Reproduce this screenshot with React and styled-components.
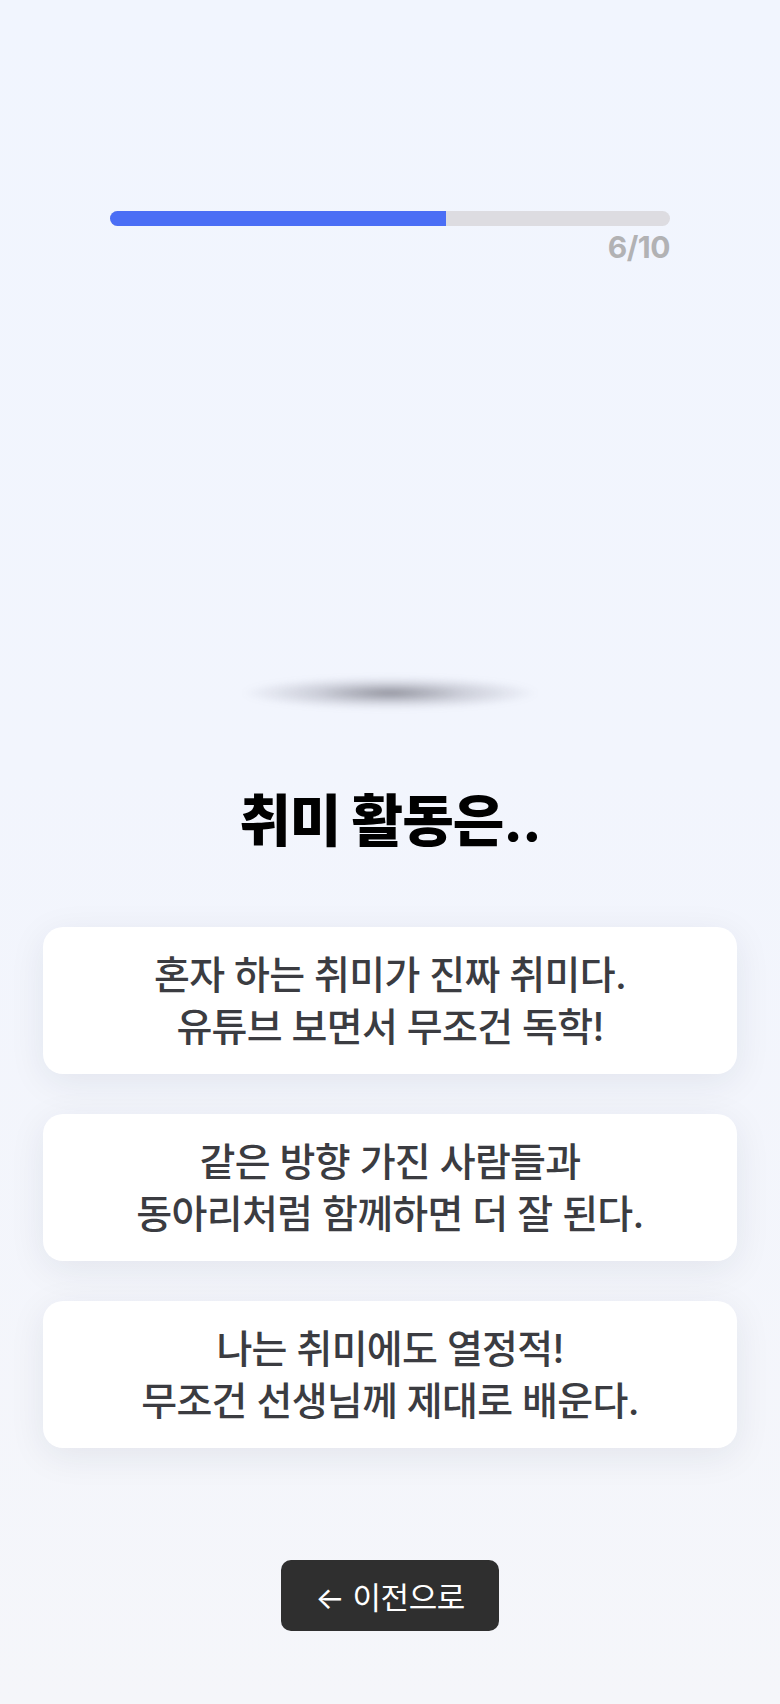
import React from 'react'
import styled, { createGlobalStyle } from 'styled-components'

const GlobalStyle = createGlobalStyle`
  * { box-sizing: border-box; }
  body {
    margin: 0;
    font-family: "Inter", "Noto Sans CJK KR", sans-serif;
    background: #f3f5fc;
  }
`

const options = [
    ['혼자 하는 취미가 진짜 취미다.', '유튜브 보면서 무조건 독학!'],
    ['같은 방향 가진 사람들과', '동아리처럼 함께하면 더 잘 된다.'],
    ['나는 취미에도 열정적!', '무조건 선생님께 제대로 배운다.'],
]

const App = () => {
    const step = 6
    const total = 10
    return (
        <Page>
            <GlobalStyle />
            <Progress>
                <Track>
                    <Fill style={{ width: `${(step / total) * 100}%` }} />
                </Track>
                <Count>{step}/{total}</Count>
            </Progress>
            <Stage>
                <Shadow />
            </Stage>
            <Title>취미 활동은..</Title>
            <Options>
                {options.map((lines, i) => (
                    <Option key={i}>
                        {lines.map((line, j) => (
                            <Line key={j}>{line}</Line>
                        ))}
                    </Option>
                ))}
            </Options>
            <Footer>
                <BackButton>← 이전으로</BackButton>
            </Footer>
        </Page>
    )
}

export default App

const Page = styled.div`
    min-height: 1704px;
    width: 100%;
    padding: 211px 43px 0;
    display: flex;
    flex-direction: column;
    align-items: center;
    background: linear-gradient(180deg, #f1f5fe 0%, #f2f5fd 45%, #f5f6fa 100%);
`

const Progress = styled.div`
    width: 560px;
    display: flex;
    flex-direction: column;
`

const Track = styled.div`
    height: 15px;
    border-radius: 8px;
    background: #dddce1;
    overflow: hidden;
`

const Fill = styled.div`
    height: 100%;
    background: #4b6ef5;
`

const Count = styled.div`
    margin-top: 3px;
    text-align: right;
    font-size: 30px;
    line-height: 36px;
    font-weight: 700;
    color: #b2b2b4;
    letter-spacing: -0.5px;
`

const Stage = styled.div`
    height: 444px;
    width: 100%;
    display: flex;
    justify-content: center;
    align-items: flex-end;
`

const Shadow = styled.div`
    width: 300px;
    height: 32px;
    border-radius: 50%;
    background: radial-gradient(ellipse at center, rgba(60, 60, 70, 0.55) 0%, rgba(90, 90, 110, 0.25) 35%, rgba(140, 140, 160, 0) 70%);
    filter: blur(3px);
`

const Title = styled.h1`
    margin: 81px 0 0;
    font-size: 56px;
    line-height: 62px;
    font-weight: 800;
    letter-spacing: -1px;
    color: #000;
`

const Options = styled.div`
    margin-top: 75px;
    width: 100%;
    display: flex;
    flex-direction: column;
    gap: 40px;
`

const Option = styled.div`
    height: 147px;
    background: #fff;
    border-radius: 20px;
    box-shadow: 0 8px 36px rgba(30, 35, 70, 0.08);
    display: flex;
    flex-direction: column;
    justify-content: center;
    align-items: center;
    cursor: pointer;
`

const Line = styled.div`
    font-size: 39px;
    line-height: 52px;
    font-weight: 500;
    letter-spacing: -0.7px;
    color: #3b3c41;
    text-align: center;
`

const Footer = styled.div`
    margin-top: 112px;
    display: flex;
    justify-content: center;
`

const BackButton = styled.button`
    width: 218px;
    height: 71px;
    border: none;
    border-radius: 10px;
    background: #2f2f2f;
    color: #fff;
    font-family: inherit;
    font-size: 31px;
    font-weight: 400;
    letter-spacing: -0.5px;
    cursor: pointer;
`
